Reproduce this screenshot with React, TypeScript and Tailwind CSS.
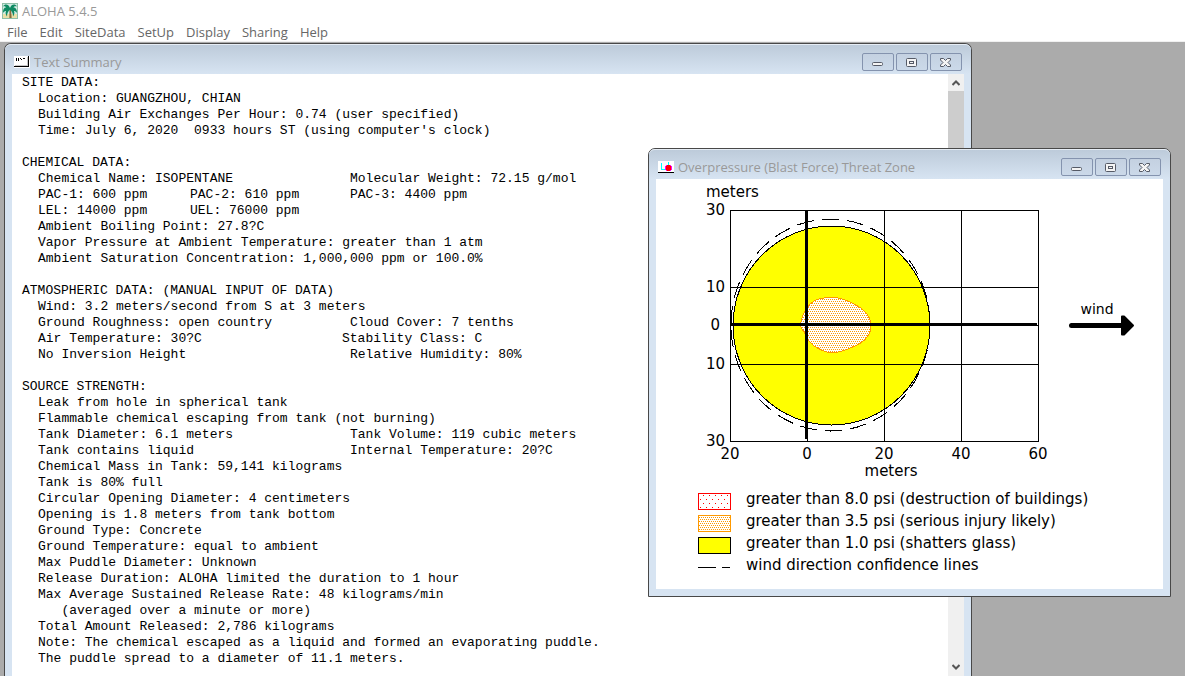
import React from 'react';
import clsx from 'clsx';

const MENUS = ['File', 'Edit', 'SiteData', 'SetUp', 'Display', 'Sharing', 'Help'];

// [text, optional second column, optional third column]
type Row = string[];

const SECTIONS: { title: string; rows: Row[] }[] = [
  {
    title: 'SITE DATA:',
    rows: [
      ['Location: GUANGZHOU, CHIAN'],
      ['Building Air Exchanges Per Hour: 0.74 (user specified)'],
      ["Time: July 6, 2020  0933 hours ST (using computer's clock)"],
    ],
  },
  {
    title: 'CHEMICAL DATA:',
    rows: [
      ['Chemical Name: ISOPENTANE', 'Molecular Weight: 72.15 g/mol'],
      ['PAC-1: 600 ppm', 'PAC-2: 610 ppm', 'PAC-3: 4400 ppm'],
      ['LEL: 14000 ppm', 'UEL: 76000 ppm', ''],
      ['Ambient Boiling Point: 27.8?C'],
      ['Vapor Pressure at Ambient Temperature: greater than 1 atm'],
      ['Ambient Saturation Concentration: 1,000,000 ppm or 100.0%'],
    ],
  },
  {
    title: 'ATMOSPHERIC DATA: (MANUAL INPUT OF DATA)',
    rows: [
      ['Wind: 3.2 meters/second from S at 3 meters'],
      ['Ground Roughness: open country', 'Cloud Cover: 7 tenths'],
      ['Air Temperature: 30?C', 'Stability Class: C'],
      ['No Inversion Height', 'Relative Humidity: 80%'],
    ],
  },
  {
    title: 'SOURCE STRENGTH:',
    rows: [
      ['Leak from hole in spherical tank'],
      ['Flammable chemical escaping from tank (not burning)'],
      ['Tank Diameter: 6.1 meters', 'Tank Volume: 119 cubic meters'],
      ['Tank contains liquid', 'Internal Temperature: 20?C'],
      ['Chemical Mass in Tank: 59,141 kilograms'],
      ['Tank is 80% full'],
      ['Circular Opening Diameter: 4 centimeters'],
      ['Opening is 1.8 meters from tank bottom'],
      ['Ground Type: Concrete'],
      ['Ground Temperature: equal to ambient'],
      ['Max Puddle Diameter: Unknown'],
      ['Release Duration: ALOHA limited the duration to 1 hour'],
      ['Max Average Sustained Release Rate: 48 kilograms/min'],
      ['   (averaged over a minute or more)'],
      ['Total Amount Released: 2,786 kilograms'],
      ['Note: The chemical escaped as a liquid and formed an evaporating puddle.'],
      ['The puddle spread to a diameter of 11.1 meters.'],
    ],
  },
];

function AppIcon() {
  return (
    <svg width="16" height="16" viewBox="0 0 16 16">
      <rect width="16" height="16" fill="#8fbfa8" />
      <rect x="1" y="1" width="14" height="14" fill="#d3ece4" />
      <path d="M1 11h14v4H1z" fill="#e9dfa8" />
      <path d="M7.5 6h1.600l.5 9H7.400z" fill="#8a6a3a" />
      <path d="M8 5C6.500 1 3 0.500 1 3.500 2.500 3 3.500 3.500 4 4.500 2 4.500 0.800 6.500 1 10 2 8.500 3 8 4 8 3.300 9.500 3.500 11.500 5 13.500 5 10.500 6 8 8 6.800 10 8 11 10.500 11 13.500 12.500 11.500 12.700 9.500 12 8 13 8 14 8.500 15 10 15.200 6.500 13.500 4.500 11.500 4.500 12 3.500 13 3 15 3.500 13 0.500 9.500 1 8 5z" fill="#0f8a62" />
    </svg>
  );
}

function TextIcon() {
  return (
    <svg width="16" height="12" viewBox="0 0 16 12" shapeRendering="crispEdges">
      <rect width="16" height="12" fill="#fff" />
      <path d="M14 0h1v11H0v-1h14z" fill="#000" />
      <path d="M13 1h1v9H1V9h12z" fill="#c8c8c8" />
      <path d="M2 2h1v3H2zM4 2h1v3H4zM6 2h1v1H6zM7 3h1v1H7zM9 2h2v1H9z" fill="#000" />
    </svg>
  );
}

function ZoneIcon() {
  return (
    <svg width="16" height="12" viewBox="0 0 16 12" shapeRendering="crispEdges">
      <rect width="16" height="12" fill="#fff" />
      <path d="M3 2h1v7H3zM3 8h5v1H3zM10 1h1v3h-1z" fill="#0ff" />
      <rect y="11" width="16" height="1" fill="#000" />
      <circle cx="10.500" cy="7" r="3.500" fill="#f0f" />
      <circle cx="10.500" cy="7" r="3" fill="#f00" />
    </svg>
  );
}

const GLYPHS: Record<string, React.ReactNode> = {
  Minimize: <rect x="1.500" y="5.500" width="10" height="3" rx="1" />,
  Maximize: (
    <>
      <rect x="1.500" y="1.500" width="10" height="8" rx="1" />
      <rect x="4.500" y="4.500" width="4" height="2" />
    </>
  ),
  Close: <path d="M1.500 1.500h3l2 2 2-2h3v1.500L9 5.500l2.500 2.500v1.500h-3l-2-2-2 2h-3V8L4 5.500 1.500 3z" />,
};

function MdiWindow({ title, icon, className, children }: {
  title: string;
  icon: React.ReactNode;
  className: string;
  children: React.ReactNode;
}) {
  return (
    <section className={clsx('absolute flex flex-col border border-[#484848] bg-[#d7e4f2] px-[7px]', className)}>
      <header className="-mx-[7px] flex h-[30px] shrink-0 items-center rounded-t-[6px] border-t border-[#e6edf5] bg-linear-to-b from-[#bdcbda] to-[#d7e4f2] pl-[9px] pr-[9px] pt-[5px]">
        {icon}
        <h2 className="ml-1 flex-1 text-[13px] leading-5 text-[#999]">{title}</h2>
        <div className="flex gap-[2px]">
          {Object.keys(GLYPHS).map((name) => (
            <button
              key={name}
              aria-label={name}
              className="flex h-[18px] w-8 items-center justify-center rounded-[2px] border border-[#8493ae] bg-linear-to-b from-[#c4d1e1] to-[#cbd9e9]"
            >
              <svg width="14" height="11" viewBox="0 0 14 11" fill="#f4f4f4" stroke="#555a66">
                {GLYPHS[name]}
              </svg>
            </button>
          ))}
        </div>
      </header>
      {children}
    </section>
  );
}

function SummaryRow({ cells }: { cells: Row }) {
  return (
    <div className="flex pl-4">
      {cells.map((cell, i) => (
        <span
          key={i}
          className={clsx(
            i < cells.length - 1 && (cells.length === 3 ? (i === 0 ? 'w-[152px]' : 'w-40') : cells[1].startsWith('Stability') ? 'w-[304px]' : 'w-[312px]'),
          )}
        >
          {cell}
        </span>
      ))}
    </div>
  );
}

function TextSummary() {
  return (
    <div className="flex min-h-0 flex-1 bg-white">
      <div className="flex-1 overflow-hidden whitespace-pre pl-[10px] pt-px font-['Liberation_Mono',monospace] text-[13px] leading-4 text-black">
        {SECTIONS.map((section) => (
          <div key={section.title} className="mb-4">
            <h3>{section.title}</h3>
            {section.rows.map((row) => (
              <SummaryRow key={row[0]} cells={row} />
            ))}
          </div>
        ))}
      </div>
      <div className="flex w-4 flex-col bg-[#f0f0f0]">
        <button aria-label="Scroll up" className="flex h-[17px] items-center justify-center">
          <svg width="8" height="6" viewBox="0 0 8 6" fill="none" stroke="#555" strokeWidth="2">
            <path d="M0.500 5L4 1.500 7.500 5" />
          </svg>
        </button>
        <div className="h-[480px] bg-[#cdcdcd]" />
        <button aria-label="Scroll down" className="mt-auto flex h-[18px] items-center justify-center">
          <svg width="8" height="6" viewBox="0 0 8 6" fill="none" stroke="#555" strokeWidth="2">
            <path d="M0.500 1L4 4.500 7.500 1" />
          </svg>
        </button>
      </div>
    </div>
  );
}

const GRID_X = [74, 151, 228, 305, 382];
const GRID_Y = [31, 108, 146, 185, 262];

function ThreatZoneChart() {
  return (
    <svg width="507" height="304" viewBox="0 0 507 304" className="block font-['DejaVu_Sans',sans-serif] text-[15px]" role="img" aria-label="Overpressure threat zone">
      <defs>
        <pattern id="dense" width="2" height="4" patternUnits="userSpaceOnUse">
          <rect width="2" height="4" fill="#fff" />
          <path d="M0 0h1v1H0zM1 2h1v1H1z" fill="#ff9900" shapeRendering="crispEdges" />
        </pattern>
      </defs>
      <g shapeRendering="crispEdges">
        <ellipse cx="175.500" cy="146.500" rx="98.500" ry="99.500" fill="#ff0" stroke="#000" />
        <path
          d="M144.500 146C146 134 153 120 168 119C180 117 190 120 200 126C208 130 215 138 215 146C215 156 208 163 199 167C190 171 182 174 175 174C164 172 154 166 151 158C149 153 145 151 144.500 146Z"
          fill="url(#dense)"
          stroke="#ff9900"
        />
        <ellipse cx="174.500" cy="146" rx="99.500" ry="106" fill="none" stroke="#000" strokeDasharray="17 8" />
        {GRID_X.map((x) => (
          <path key={x} d={`M${x + 0.5} 31V263`} stroke="#000" />
        ))}
        {GRID_Y.map((y) => (
          <path key={y} d={`M74 ${y + 0.5}H383`} stroke="#000" />
        ))}
        <path d="M150.500 31V260M74 145.500H381" stroke="#000" strokeWidth="3" />
      </g>
      <path d="M415.500 146.500H468" stroke="#000" strokeWidth="5" strokeLinecap="round" />
      <path d="M466 137.500h2l9 9-9 9h-2z" stroke="#000" strokeWidth="2" strokeLinejoin="round" />
      <text x="50" y="18">meters</text>
      <g textAnchor="end">
        <text x="69" y="36">30</text>
        <text x="69" y="113">10</text>
        <text x="64" y="151">0</text>
        <text x="69" y="190">10</text>
        <text x="69" y="267">30</text>
      </g>
      <g textAnchor="middle">
        <text x="74" y="280">20</text>
        <text x="151" y="280">0</text>
        <text x="228" y="280">20</text>
        <text x="305" y="280">40</text>
        <text x="382" y="280">60</text>
        <text x="235" y="297">meters</text>
        <text x="441" y="135" className="text-[14px]">wind</text>
      </g>
    </svg>
  );
}

const LEGEND = [
  { label: 'greater than 8.0 psi (destruction of buildings)', fill: 'url(#sparse)', stroke: '#ff0000' },
  { label: 'greater than 3.5 psi (serious injury likely)', fill: 'url(#dense)', stroke: '#ff9900' },
  { label: 'greater than 1.0 psi (shatters glass)', fill: '#ffff00', stroke: '#000000' },
  { label: 'wind direction confidence lines' },
];

function Legend() {
  return (
    <ul className="flex flex-col pl-[42px] pt-[5px]">
      {LEGEND.map((item) => (
        <li key={item.label} className="flex h-[22px] items-center gap-[15px]">
          <svg width="33" height="17" viewBox="0 0 33 17" className="mt-1" shapeRendering="crispEdges">
            <defs>
              <pattern id="sparse" width="6" height="8" patternUnits="userSpaceOnUse">
                <rect width="6" height="8" fill="#fff" />
                <path d="M5 2h1v1H5zM2 6h1v1H2z" fill="#f00" />
              </pattern>
            </defs>
            {item.fill ? (
              <rect x="0.500" y="0.500" width="32" height="16" fill={item.fill} stroke={item.stroke} />
            ) : (
              <path d="M0 8.500H18M24 8.500H32" stroke="#000" />
            )}
          </svg>
          <span className="whitespace-nowrap font-['DejaVu_Sans',sans-serif] text-[15px] leading-5 text-black">{item.label}</span>
        </li>
      ))}
    </ul>
  );
}

export default function App() {
  return (
    <div className="flex h-screen flex-col overflow-hidden bg-white font-['Open_Sans','Noto_Sans_CJK_SC',sans-serif]">
      <header className="flex h-[22px] shrink-0 items-center gap-1 pl-[2px]">
        <AppIcon />
        <h1 className="text-[13px] leading-5 text-[#999]">ALOHA 5.4.5</h1>
      </header>
      <nav className="flex h-5 shrink-0 items-center gap-3 border-b border-[#f0f0f0] pl-[7px]">
        {MENUS.map((menu) => (
          <button key={menu} className="text-[13px] leading-5 text-[#666]">{menu}</button>
        ))}
      </nav>
      <main className="relative flex-1 overflow-hidden bg-[#ababab]">
        <MdiWindow title="Text Summary" icon={<TextIcon />} className="bottom-0 left-1 top-px w-[968px] rounded-t-[7px] border-b-0">
          <TextSummary />
        </MdiWindow>
        <MdiWindow title="Overpressure (Blast Force) Threat Zone" icon={<ZoneIcon />} className="left-[648px] top-[106px] w-[523px] rounded-t-[7px] pb-[7px]">
          <div className="h-[410px] bg-white">
            <ThreatZoneChart />
            <Legend />
          </div>
        </MdiWindow>
      </main>
    </div>
  );
}
